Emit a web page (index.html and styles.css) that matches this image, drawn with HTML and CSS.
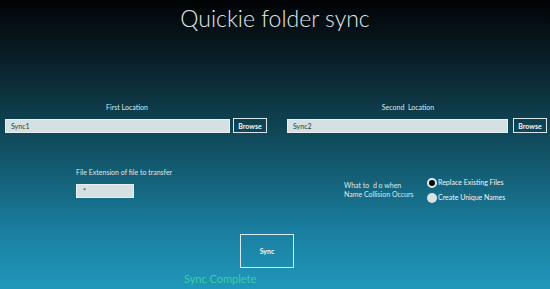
FILE: index.html
```html
<!DOCTYPE html>
<html>
<head>
<meta charset="utf-8">
<link rel="stylesheet" href="styles.css">
</head>
<body>
<div class="page">
  <h1 class="title">Quickie folder sync</h1>
  <div class="locations">
    <div class="loc loc-first">
      <div class="loc-label">First Location</div>
      <div class="loc-row">
        <div class="field field-wide">Sync1</div>
        <button class="btn">Browse</button>
      </div>
    </div>
    <div class="loc loc-second">
      <div class="loc-label">Second&nbsp; Location</div>
      <div class="loc-row">
        <div class="field field-wide">Sync2</div>
        <button class="btn">Browse</button>
      </div>
    </div>
  </div>
  <div class="options">
    <div class="ext">
      <div class="ext-label">File Extension of file to transfer</div>
      <div class="field field-ext">*</div>
    </div>
    <div class="collision">
      <div class="collision-label">What to&nbsp; d o when<br>Name Collision Occurs</div>
      <div class="radios">
        <div class="radio"><span class="dot dot-on"></span>Replace Existing Files</div>
        <div class="radio"><span class="dot"></span>Create Unique Names</div>
      </div>
    </div>
  </div>
  <button class="sync">Sync</button>
  <div class="status">Sync Complete</div>
</div>
</body>
</html>
```
FILE: styles.css
```css
html, body {
  margin: 0;
  padding: 0;
}
body {
  width: 550px;
  height: 289px;
  overflow: hidden;
  background: linear-gradient(180deg, #010305 0%, #0b2630 25%, #12566a 55%, #1a7fa0 80%, #1f97bb 100%);
  font-family: Lato, "Open Sans", sans-serif;
  color: #e6eef0;
}
.page {
  display: flex;
  flex-direction: column;
  height: 289px;
}
.title {
  margin: 3px 0 0 0;
  text-align: center;
  font-weight: 300;
  font-size: 23px;
  line-height: 31px;
  color: #e4e8ea;
}
.locations {
  display: flex;
  gap: 20px;
  padding: 0 4px 0 5px;
  margin-top: 68px;
}
.loc {
  display: flex;
  flex-direction: column;
  flex: 1;
}
.loc-first { flex: 0 0 262px; }
.loc-second { flex: 0 0 260px; }
.loc-label {
  font-size: 7px;
  line-height: 10px;
  text-align: center;
  padding-right: 18px;
  color: #dfe9ec;
}
.loc-row {
  display: flex;
  align-items: center;
  gap: 3px;
  margin-top: 6px;
}
.field {
  background: #d5e0e3;
  border: 1px solid #e9f0f2;
  box-sizing: border-box;
  color: #2b3a40;
  font-size: 7px;
  line-height: 12px;
  padding: 0 5px;
}
.field-wide {
  flex: 1;
  height: 14px;
}
.loc-second .field-wide { margin-right: 2px; }
.btn {
  width: 34px;
  height: 15px;
  box-sizing: border-box;
  border: 1.5px solid #d9e6ea;
  background: transparent;
  color: #f2f7f8;
  font-family: inherit;
  font-size: 7px;
  font-weight: 700;
  padding: 0;
}
.options {
  display: flex;
  padding-left: 76px;
  margin-top: 34px;
}
.ext {
  display: flex;
  flex-direction: column;
  width: 268px;
}
.ext-label {
  font-size: 7px;
  line-height: 10px;
  color: #dfe9ec;
}
.field-ext {
  width: 58px;
  height: 14px;
  margin-top: 7px;
  line-height: 13px;
  padding-left: 6px;
}
.collision {
  display: flex;
  gap: 3px;
  margin-top: 10px;
}
.collision-label {
  width: 80px;
  margin-top: 4px;
  font-size: 7px;
  line-height: 9px;
  color: #dfe9ec;
}
.radios {
  display: flex;
  flex-direction: column;
  gap: 4px;
}
.radio {
  display: flex;
  align-items: center;
  gap: 1px;
  font-size: 7px;
  line-height: 11px;
  color: #f0f5f6;
}
.dot {
  width: 10px;
  height: 10px;
  border-radius: 50%;
  background: #d9e4e7;
  box-sizing: border-box;
}
.dot-on {
  background: #0a0a0a;
  border: 2.5px solid #e4ecee;
}
.sync {
  margin: 31px 0 0 240px;
  width: 54px;
  height: 34px;
  box-sizing: border-box;
  border: 1.5px solid #d6eaf0;
  background: transparent;
  color: #f4f9fa;
  font-family: inherit;
  font-size: 7px;
  font-weight: 700;
  padding: 0;
}
.status {
  margin: 3px 0 0 184px;
  font-size: 11px;
  line-height: 15px;
  color: #3ccf9f;
}
```
